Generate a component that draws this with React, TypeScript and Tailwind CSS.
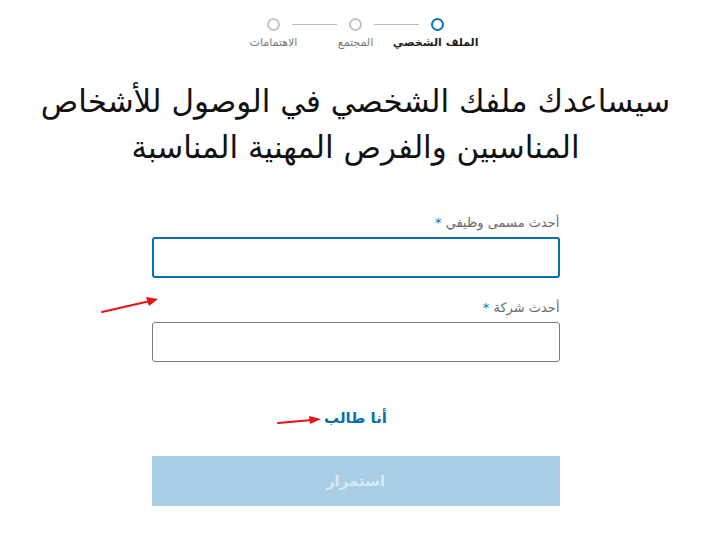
import React from "react";

const steps = [
  { label: "الملف الشخصي", active: true },
  { label: "المجتمع", active: false },
  { label: "الاهتمامات", active: false },
];

function Stepper() {
  return (
    <div dir="rtl" className="flex flex-col items-center pt-[18px]">
      <div className="flex items-center">
        {steps.map((s, i) => (
          <React.Fragment key={s.label}>
            <div
              className={
                s.active
                  ? "h-[13px] w-[13px] rounded-full border-2 border-[#0a75b5] bg-white"
                  : "h-[13px] w-[13px] rounded-full border-2 border-[#c4c4c4] bg-white"
              }
            />
            {i < steps.length - 1 && <div className="mx-[12px] h-px w-[45px] bg-[#bdbdbd]" />}
          </React.Fragment>
        ))}
      </div>
      <div className="mt-[5px] flex">
        {steps.map((s) => (
          <div
            key={s.label}
            className={
              s.active
                ? "w-[82px] whitespace-nowrap text-center text-[11px] font-bold leading-[14px] text-[#1f1f1f]"
                : "w-[82px] whitespace-nowrap text-center text-[11px] leading-[14px] text-[#7a7a7a]"
            }
          >
            {s.label}
          </div>
        ))}
      </div>
    </div>
  );
}

function Field({ label, focused }: { label: string; focused?: boolean }) {
  return (
    <div className="flex flex-col">
      <label className="mb-[6px] text-[13px] leading-[16px] text-[#6b6b6b]">
        {label} <span className="text-[#0a75b5]">*</span>
      </label>
      <div
        className={
          focused
            ? "h-[41px] rounded-[3px] border-2 border-[#0a6fae] bg-white"
            : "h-[40px] rounded-[3px] border border-[#7b7b7b] bg-white"
        }
      />
    </div>
  );
}

export default function App() {
  return (
    <div
      className="relative h-[555px] w-[701px] overflow-hidden bg-white pl-[10px]"
      style={{ fontFamily: "'DejaVu Sans', 'Liberation Sans', sans-serif" }}
    >
      <Stepper />
      <h1
        dir="rtl"
        className="mt-[28px] text-center text-[31px] font-normal leading-[46px] text-[#111]"
      >
        سيساعدك ملفك الشخصي في الوصول للأشخاص
        <br />
        المناسبين والفرص المهنية المناسبة
      </h1>

      <div dir="rtl" className="mx-auto mt-[45px] flex w-[408px] flex-col gap-[22px]">
        <Field label="أحدث مسمى وظيفي" focused />
        <Field label="أحدث شركة" />
      </div>

      <div dir="rtl" className="mt-[46px] flex justify-center">
        <a className="text-[15px] font-bold leading-[20px] text-[#0a6fae]">أنا طالب</a>
      </div>

      <div dir="rtl" className="mx-auto mt-[28px] w-[408px]">
        <button className="flex h-[50px] w-full items-center justify-center bg-[#a8cfe5] text-[15px] font-bold text-[#d8eaf4]">
          استمرار
        </button>
      </div>

      <svg className="absolute left-[100px] top-[294px] h-[22px] w-[62px]" viewBox="0 0 62 22">
        <path d="M2 18 L50 7" stroke="#ee1111" strokeWidth="2" strokeLinecap="round" />
        <path d="M46 3 L58 5 L49 12 Z" fill="#ee1111" />
      </svg>
      <svg className="absolute left-[276px] top-[412px] h-[16px] w-[48px]" viewBox="0 0 48 16">
        <path d="M2 11 L36 8" stroke="#ee1111" strokeWidth="2" strokeLinecap="round" />
        <path d="M33 4 L45 7 L34 12 Z" fill="#ee1111" />
      </svg>
    </div>
  );
}
